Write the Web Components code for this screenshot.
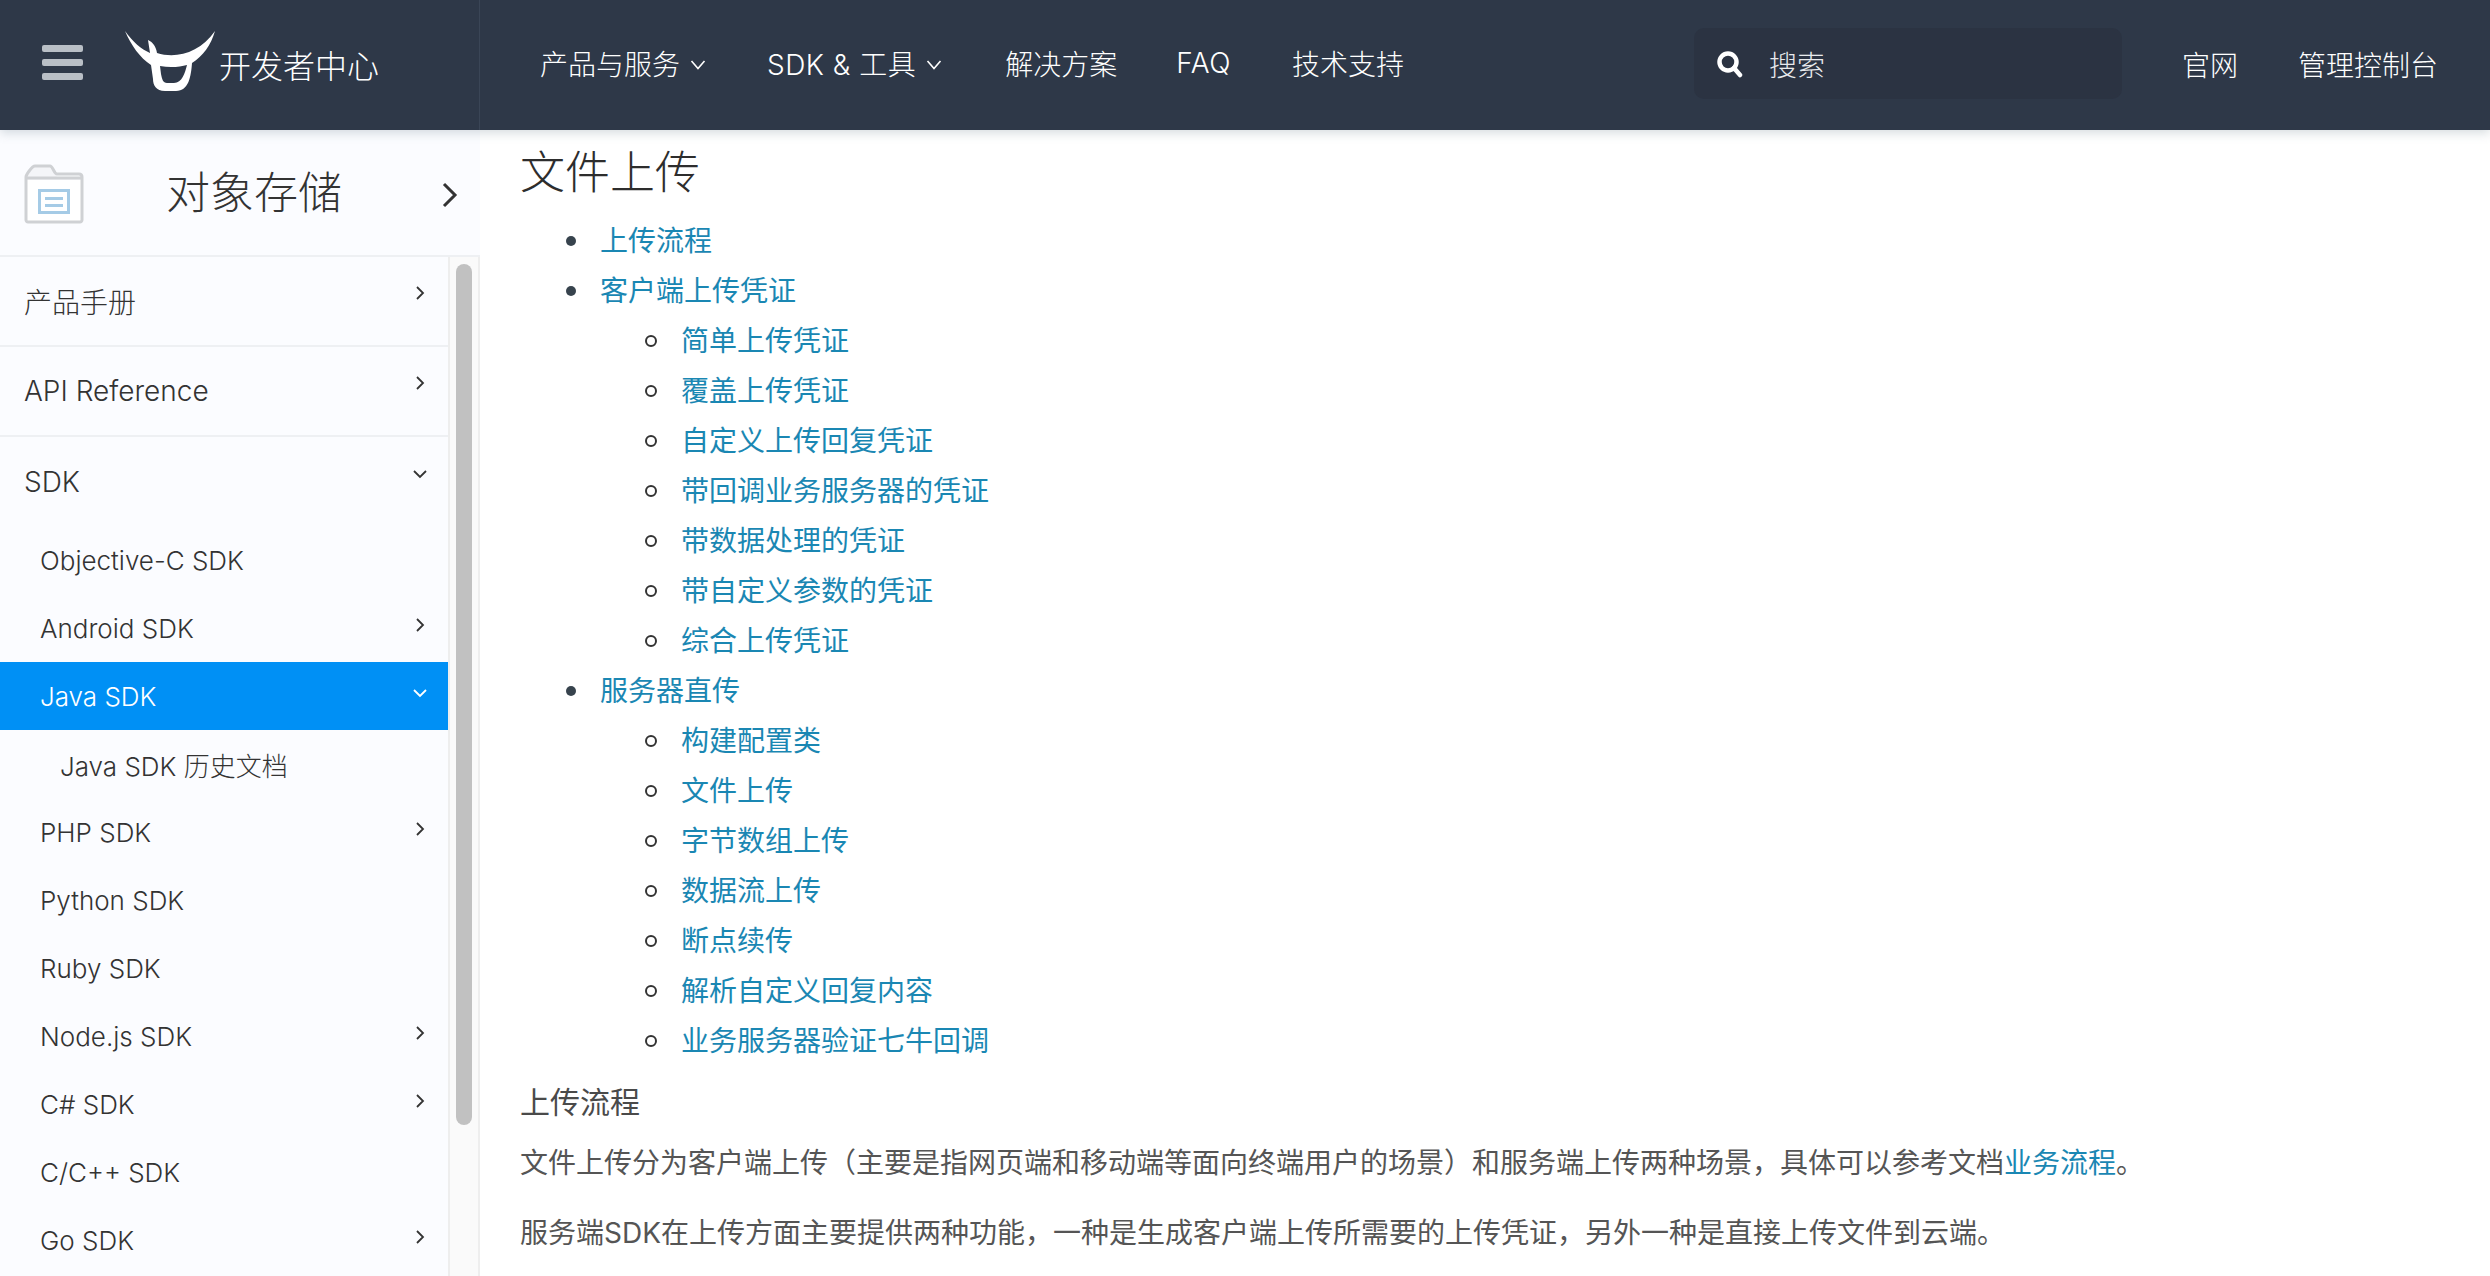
<!DOCTYPE html>
<html lang="zh">
<head>
<meta charset="utf-8">
<title>文件上传</title>
<style>
  html, body { margin: 0; height: 100%; overflow: hidden; background: #fff; }
  body { font-family: Inter, "Noto Sans CJK SC", sans-serif; font-weight: 300; color: #333; }
</style>
</head>
<body>
<doc-page>
  <top-bar slot="top">
    <top-link slot="nav" caret>产品与服务</top-link>
    <top-link slot="nav" caret style="margin-left:61px;letter-spacing:.5px">SDK &amp; 工具</top-link>
    <top-link slot="nav" style="margin-left:63px">解决方案</top-link>
    <top-link slot="nav" style="margin-left:59px;letter-spacing:.5px">FAQ</top-link>
    <top-link slot="nav" style="margin-left:61px">技术支持</top-link>
    <top-link slot="right">官网</top-link>
    <top-link slot="right" style="margin-left:60px">管理控制台</top-link>
  </top-bar>
  <side-bar slot="side">
    <side-item level="0" arrow="right">产品手册</side-item>
    <side-item level="0" arrow="right">API Reference</side-item>
    <side-item level="0" arrow="down" open>SDK</side-item>
    <side-item level="1">Objective-C SDK</side-item>
    <side-item level="1" arrow="right">Android SDK</side-item>
    <side-item level="1" arrow="down" active>Java SDK</side-item>
    <side-item level="2">Java SDK 历史文档</side-item>
    <side-item level="1" arrow="right">PHP SDK</side-item>
    <side-item level="1">Python SDK</side-item>
    <side-item level="1">Ruby SDK</side-item>
    <side-item level="1" arrow="right">Node.js SDK</side-item>
    <side-item level="1" arrow="right">C# SDK</side-item>
    <side-item level="1">C/C++ SDK</side-item>
    <side-item level="1" arrow="right">Go SDK</side-item>
  </side-bar>
  <doc-article slot="main"></doc-article>
</doc-page>

<script>
class DocPage extends HTMLElement {
  constructor() {
    super();
    this.attachShadow({ mode: "open" });
    this.shadowRoot.innerHTML = `
    <style>
      :host { display: grid; grid-template-columns: 480px 1fr; grid-template-rows: 130px 1fr; height: 100vh; overflow: hidden; }
      .top { grid-column: 1 / 3; position: relative; z-index: 2; box-shadow: 0 3px 10px rgba(120, 140, 150, .3); }
      .side, .main { overflow: hidden; min-height: 0; }
    </style>
    <div class="top"><slot name="top"></slot></div>
    <div class="side"><slot name="side"></slot></div>
    <div class="main"><slot name="main"></slot></div>
    `;
  }
}

class TopBar extends HTMLElement {
  constructor() {
    super();
    this.attachShadow({ mode: "open" });
    this.shadowRoot.innerHTML = `
    <style>
      :host { display: flex; align-items: center; height: 130px; background: #2e3848; color: #fff; font-size: 28px; }
      .brand { display: flex; align-items: center; width: 480px; height: 100%; box-sizing: border-box; flex: none; padding-left: 42px; border-right: 1px solid #3a4556; }
      .burger { display: flex; flex-direction: column; gap: 7px; width: 41px; margin-right: 37px; margin-top: -6px; }
      .burger i { display: block; height: 7px; border-radius: 2px; background: #b9bfc6; }
      .logo { width: 100px; height: 66px; margin-top: -6px; flex: none; }
      .name { font-size: 32px; margin-left: -1px; margin-top: -3px; white-space: nowrap; }
      nav { display: flex; align-items: center; margin-left: 60px; margin-top: -4px; }
      .search { display: flex; align-items: center; box-sizing: border-box; width: 428px; height: 71px; margin-left: auto; margin-bottom: 3px; padding-left: 21px; background: #2b3342; border-radius: 10px; color: #e8eaed; }
      .search svg { width: 28px; height: 28px; margin-right: 26px; }
      .right { display: flex; align-items: center; margin-left: 60px; margin-right: 52px; margin-top: -3px; }
    </style>
    <div class="brand">
      <div class="burger"><i></i><i></i><i></i></div>
      <svg class="logo" viewBox="0 0 100 66">
        <path fill="#fff" fill-rule="evenodd" d="M5 2C13 13 21 20 30 24L28 11C33 13 36 18 37 24C56 30 80 24 95 2C91 16 83 27 72 34C71 47 69 62 56 62L45 62C36 62 33 56 33 50L31 36C20 29 11 16 5 2ZM40 37C50 39 60 38 67 36C65 44 62 54 54 54L47 54C43 54 42 50 41 45Z"/>
      </svg>
      <span class="name">开发者中心</span>
    </div>
    <nav><slot name="nav"></slot></nav>
    <div class="search">
      <svg viewBox="0 0 28 28"><circle cx="13" cy="12" r="8.5" fill="none" stroke="#fff" stroke-width="4.5"/><path d="M19 18l6 7" stroke="#fff" stroke-width="4.5" stroke-linecap="round"/></svg>
      <span>搜索</span>
    </div>
    <div class="right"><slot name="right"></slot></div>
    `;
  }
}

class TopLink extends HTMLElement {
  constructor() {
    super();
    this.attachShadow({ mode: "open" });
  }
  connectedCallback() {
    const caret = this.hasAttribute("caret")
      ? `<svg viewBox="0 0 16 10"><path d="M1.500 1l6.500 7.500L14.500 1" fill="none" stroke="#fff" stroke-width="1.600"/></svg>`
      : "";
    this.shadowRoot.innerHTML = `
    <style>
      :host { display: inline-flex; align-items: center; white-space: nowrap; }
      svg { width: 16px; height: 10px; margin-left: 10px; margin-top: 3px; }
    </style>
    <slot></slot>${caret}
    `;
  }
}

class SideBar extends HTMLElement {
  constructor() {
    super();
    this.attachShadow({ mode: "open" });
    this.shadowRoot.innerHTML = `
    <style>
      :host { display: block; height: 100%; background: #fbfcff; color: #333; overflow: hidden; }
      .head { display: flex; align-items: center; height: 127px; box-sizing: border-box; padding: 0 22px 0 24px; border-bottom: 2px solid #eef0f3; }
      .head .folder { width: 60px; height: 60px; flex: none; margin-top: 2px; }
      .head .title { flex: 1; text-align: center; font-size: 44px; margin-left: 8px; margin-right: 26px; margin-top: -6px; }
      .head .go { width: 16px; height: 26px; flex: none; margin-top: 4px; }
      .body { display: flex; height: calc(100% - 127px); }
      .list { width: 448px; flex: none; }
      .track { width: 32px; flex: none; box-sizing: border-box; padding: 7px 8px 0 8px; background: #fafafa; border-left: 2px solid #eeeeee; border-right: 2px solid #eeeeee; }
      .thumb { width: 16px; height: 861px; margin-left: -2px; background: #c1c1c1; border-radius: 8px; }
    </style>
    <div class="head">
      <svg class="folder" viewBox="0 0 60 60">
        <path d="M3 58V13L9 3H28L33 13H57V58Z" fill="#f4f5f8"/>
        <path d="M3 16H57V55a2 2 0 0 1-2 2H5a2 2 0 0 1-2-2Z" fill="#fff"/>
        <path d="M2 56V13C2 11 8 2 11 2H26C29 2 30 10 33 10H55C57 10 58 11 58 13V56C58 57 57 58 56 58H4C3 58 2 57 2 56Z M2 14H58" fill="none" stroke="#cfd1d4" stroke-width="3"/>
        <rect x="15.500" y="26.500" width="29" height="22" fill="#fff" stroke="#a5cbe6" stroke-width="3"/>
        <path d="M21 34.500H39M21 41.500H39" stroke="#a5cbe6" stroke-width="3"/>
      </svg>
      <span class="title">对象存储</span>
      <svg class="go" viewBox="0 0 16 26"><path d="M2 2l11 11L2 24" fill="none" stroke="#333" stroke-width="3"/></svg>
    </div>
    <div class="body">
      <div class="list"><slot></slot></div>
      <div class="track"><div class="thumb"></div></div>
    </div>
    `;
  }
}

class SideItem extends HTMLElement {
  constructor() {
    super();
    this.attachShadow({ mode: "open" });
  }
  connectedCallback() {
    const level = this.getAttribute("level");
    const arrow = this.getAttribute("arrow");
    let icon = "";
    if (arrow === "right") {
      icon = `<svg viewBox="0 0 14 14"><path d="M4 1l6 6-6 6" fill="none" stroke="currentColor" stroke-width="1.800"/></svg>`;
    } else if (arrow === "down") {
      icon = `<svg viewBox="0 0 14 14"><path d="M1 4l6 6 6-6" fill="none" stroke="currentColor" stroke-width="1.800"/></svg>`;
    }
    const top = level === "0";
    const open = this.hasAttribute("open");
    const pad = { 0: 24, 1: 40, 2: 60 }[level];
    const active = this.hasAttribute("active");
    this.shadowRoot.innerHTML = `
    <style>
      :host { display: flex; align-items: center; box-sizing: border-box; height: ${open ? 89 : top ? 90 : 68}px; padding: 0 21px 0 ${pad}px;
        font-size: ${top ? 28 : 26}px; white-space: nowrap;
        ${top && !open ? "border-bottom: 2px solid #eef0f3;" : ""}
        ${active ? "background: #0090f5; color: #fff;" : ""} }
      .text { flex: 1; }
      svg { width: 14px; height: 14px; flex: none; margin-top: ${top ? -16 : -6}px; }
    </style>
    <span class="text"><slot></slot></span>${icon}
    `;
  }
}

const TOC = [
  ["上传流程"],
  ["客户端上传凭证", ["简单上传凭证", "覆盖上传凭证", "自定义上传回复凭证", "带回调业务服务器的凭证", "带数据处理的凭证", "带自定义参数的凭证", "综合上传凭证"]],
  ["服务器直传", ["构建配置类", "文件上传", "字节数组上传", "数据流上传", "断点续传", "解析自定义回复内容", "业务服务器验证七牛回调"]],
];

class DocArticle extends HTMLElement {
  constructor() {
    super();
    this.attachShadow({ mode: "open" });
    const toc = TOC.map(([label, kids]) => {
      const sub = kids ? `<ul>${kids.map((k) => `<li><a href="#">${k}</a></li>`).join("")}</ul>` : "";
      return `<li><a href="#">${label}</a>${sub}</li>`;
    }).join("");
    this.shadowRoot.innerHTML = `
    <style>
      :host { display: block; padding: 0 0 0 40px; color: #555; font-size: 28px; font-weight: 400; }
      h1 { font-size: 45px; font-weight: 300; line-height: 60px; margin: 13px 0 0; color: #2d2d2d; }
      h2 { font-size: 30px; font-weight: 400; line-height: 42px; margin: 15px 0 0; color: #4a4a4a; }
      ul { list-style: none; margin: 0; padding: 0 0 0 80px; line-height: 50px; }
      ul ul { padding-left: 81px; }
      .toc { margin-top: 13px; }
      li::before { content: ""; display: inline-block; width: 10px; height: 10px; margin-left: -34px; margin-right: 24px; border-radius: 50%; background: #37434d; vertical-align: 5px; }
      ul ul li::before { box-sizing: border-box; width: 12px; height: 12px; margin-left: -36px; margin-right: 24px; background: none; border: 2px solid #333; vertical-align: 4px; }
      a { color: #1a87b3; text-decoration: none; }
      p { margin: 0; line-height: 40px; white-space: nowrap; }
      p.one { margin-top: 20px; }
      p.two { margin-top: 30px; }
    </style>
    <h1>文件上传</h1>
    <ul class="toc">${toc}</ul>
    <h2>上传流程</h2>
    <p class="one">文件上传分为客户端上传（主要是指网页端和移动端等面向终端用户的场景）和服务端上传两种场景，具体可以参考文档<a href="#">业务流程</a>。</p>
    <p class="two">服务端SDK在上传方面主要提供两种功能，一种是生成客户端上传所需要的上传凭证，另外一种是直接上传文件到云端。</p>
    `;
  }
}

customElements.define("doc-page", DocPage);
customElements.define("top-bar", TopBar);
customElements.define("top-link", TopLink);
customElements.define("side-bar", SideBar);
customElements.define("side-item", SideItem);
customElements.define("doc-article", DocArticle);
</script>
</body>
</html>
